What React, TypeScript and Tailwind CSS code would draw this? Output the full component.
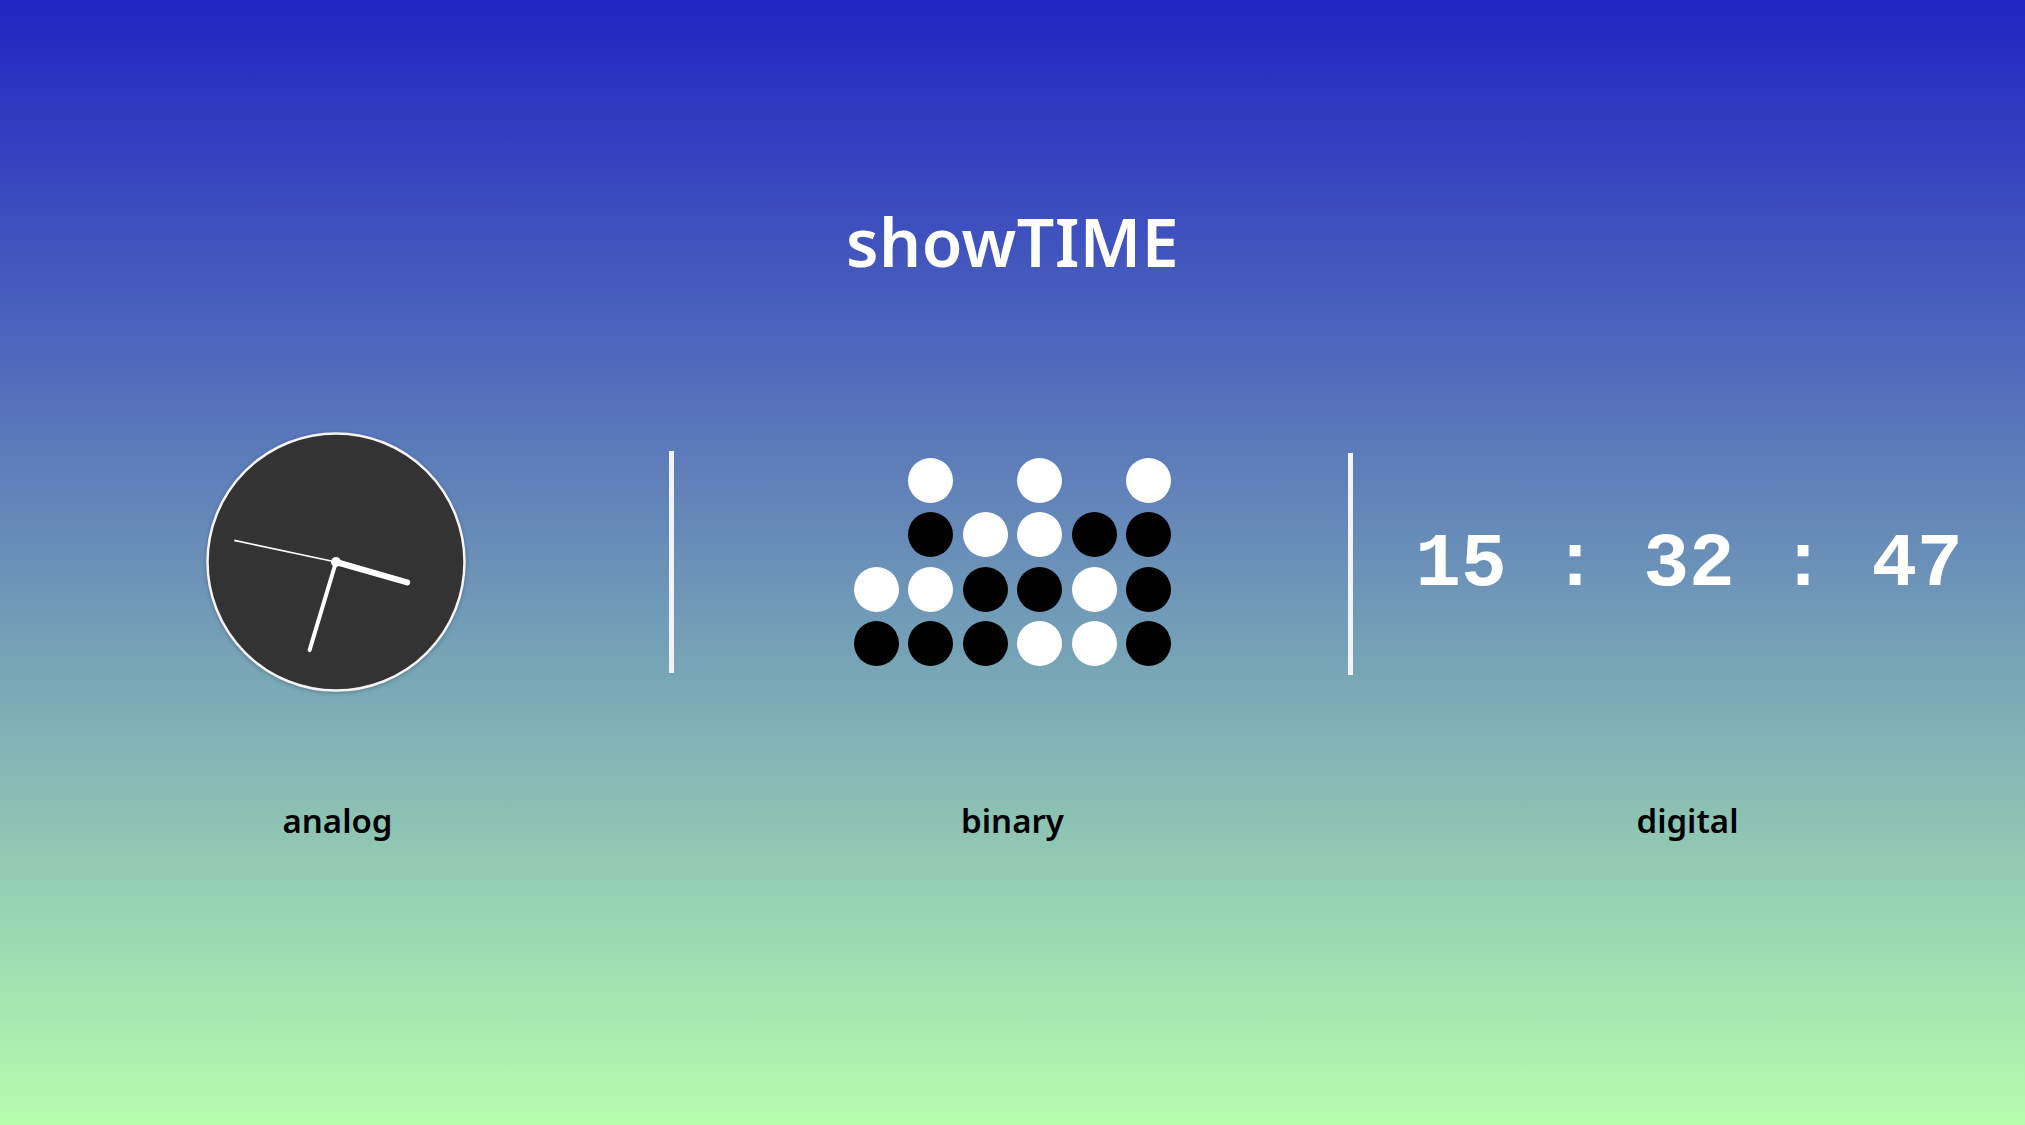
import React from 'react';

const TIME = { h: 15, m: 32, s: 47 };

// tens/ones digits of hh mm ss, with how many bits each column shows
const columns = [
  { value: Math.floor(TIME.h / 10), bits: 2 },
  { value: TIME.h % 10, bits: 4 },
  { value: Math.floor(TIME.m / 10), bits: 3 },
  { value: TIME.m % 10, bits: 4 },
  { value: Math.floor(TIME.s / 10), bits: 3 },
  { value: TIME.s % 10, bits: 4 },
];

const pad = (n: number) => n.toString().padStart(2, '0');

const hand = (deg: number, len: number) => {
  const r = (deg * Math.PI) / 180;
  return { x2: 132 + Math.sin(r) * len, y2: 132 - Math.cos(r) * len };
};

const AnalogClock: React.FC = () => {
  const sec = TIME.s * 6;
  const min = (TIME.m + TIME.s / 60) * 6;
  const hr = ((TIME.h % 12) + TIME.m / 60) * 30;
  return (
    <svg width="264" height="264" viewBox="0 0 264 264" className="drop-shadow-[0_1px_2px_rgba(0,0,0,0.25)]">
      <circle cx="132" cy="132" r="128.5" fill="#333333" stroke="#f4f4f4" strokeWidth="2.5" />
      <line x1="132" y1="132" {...hand(hr, 74)} stroke="#fff" strokeWidth="6" strokeLinecap="round" />
      <line x1="132" y1="132" {...hand(min, 92)} stroke="#fff" strokeWidth="4" strokeLinecap="round" />
      <line x1="132" y1="132" {...hand(sec, 104)} stroke="#fff" strokeWidth="1.6" />
      <circle cx="132" cy="132" r="5" fill="#fff" />
    </svg>
  );
};

const BinaryClock: React.FC = () => (
  <div className="flex items-end gap-[9.5px]">
    {columns.map((col, i) => (
      <div key={i} className="flex flex-col gap-[9.5px]">
        {Array.from({ length: col.bits }).map((_, j) => {
          const bit = col.bits - 1 - j;
          const on = (col.value >> bit) & 1;
          return <div key={j} className={on ? 'w-[45px] h-[45px] rounded-full bg-black' : 'w-[45px] h-[45px] rounded-full bg-white'} />;
        })}
      </div>
    ))}
  </div>
);

const App: React.FC = () => {
  return (
    <div
      className="h-screen w-full flex flex-col bg-[linear-gradient(to_bottom,#2024c2,#b5fdae)] overflow-hidden"
      style={{ fontFamily: '"Noto Sans", "Open Sans", sans-serif' }}
    >
      <h1 className="mt-[203px] text-center text-[66px] leading-[76px] font-semibold text-white tracking-[0.5px]">showTIME</h1>

      <div className="mt-[151px] grid grid-cols-[1fr_5px_1fr_5px_1fr] h-[260px]">
        <div className="flex items-center justify-center">
          <AnalogClock />
        </div>
        <div className="w-[5px] h-[222px] bg-[#f2f3f6] self-center -ml-[3px]" />
        <div className="flex items-center justify-center">
          <BinaryClock />
        </div>
        <div className="w-[5px] h-[222px] bg-[#f2f3f6] self-center mt-[4px]" />
        <div className="flex items-center pl-[62px] pt-[5px]">
          <span
            className="text-white font-bold text-[76px] leading-none"
            style={{ fontFamily: '"Liberation Mono", "Courier New", monospace' }}
          >
            {pad(TIME.h)} : {pad(TIME.m)} : {pad(TIME.s)}
          </span>
        </div>
      </div>

      <div className="mt-[111px] grid grid-cols-3 text-center text-[33px] leading-[40px] font-semibold text-black">
        <span>analog</span>
        <span>binary</span>
        <span>digital</span>
      </div>
    </div>
  );
};

export default App;
